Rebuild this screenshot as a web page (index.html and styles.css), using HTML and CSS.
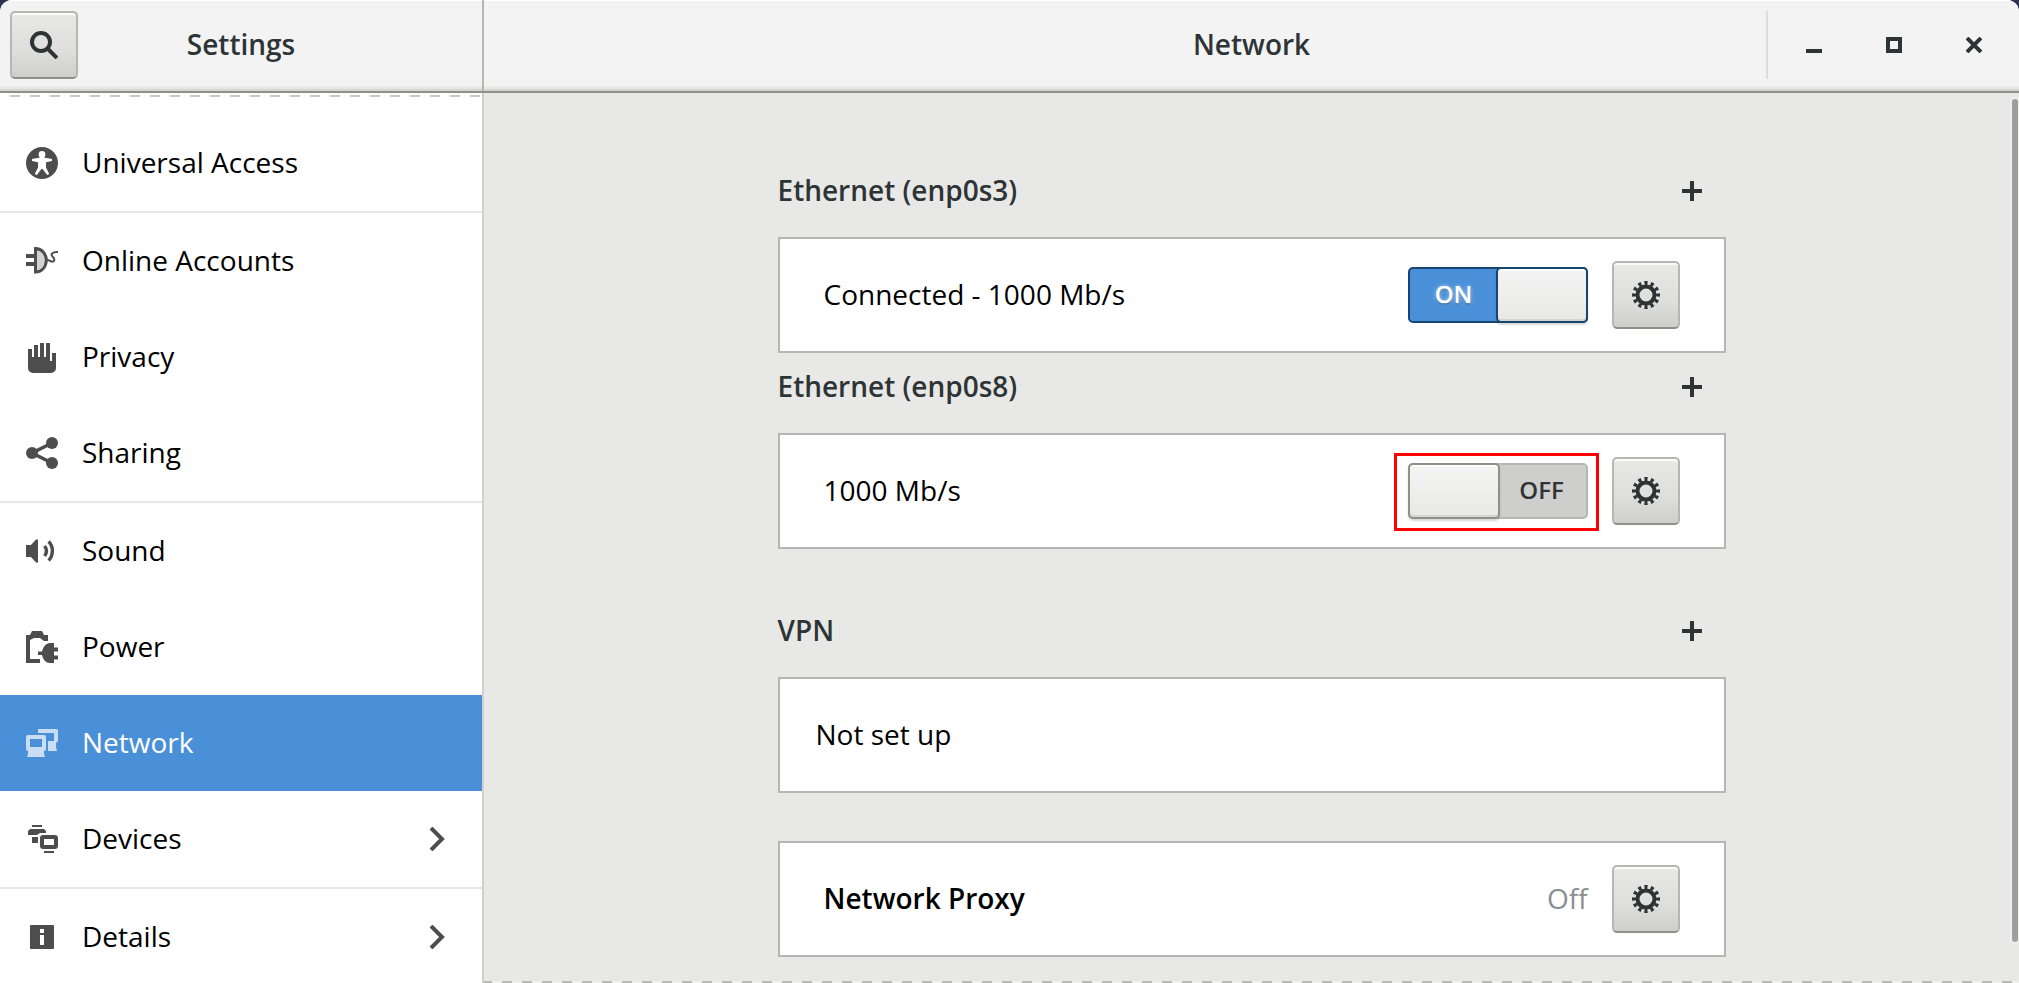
FILE: index.html
```html
<!DOCTYPE html>
<html lang="en">
<head>
  <meta charset="UTF-8" />
  <meta name="viewport" content="width=device-width, initial-scale=1.0"/>
  <title>Settings</title>
  <link rel="stylesheet" href="styles.css">
</head>
<body>

  <!-- symbols used more than once -->
  <svg class="defs" aria-hidden="true">
    <symbol id="gear" viewBox="0 0 28 28">
      <circle cx="14" cy="14" r="8.500" fill="none" stroke="currentColor" stroke-width="4"/>
      <circle cx="14" cy="14" r="12" fill="none" stroke="currentColor" stroke-width="4" pathLength="120" stroke-dasharray="5 5" stroke-dashoffset="2.5"/>
    </symbol>
    <symbol id="plus" viewBox="0 0 20 20">
      <path d="M8 0h4v8h8v4h-8v8H8v-8H0V8h8z" fill="currentColor"/>
    </symbol>
    <symbol id="chevron" viewBox="0 0 16 24">
      <path d="M2 1l11 11L2 23" fill="none" stroke="currentColor" stroke-width="4"/>
    </symbol>
  </svg>

  <div class="window">

    <header class="headerbar">
      <div class="header-side">
        <button class="btn" type="button" aria-label="Search">
          <svg width="28" height="28" viewBox="0 0 28 28">
            <circle cx="11" cy="11" r="9" fill="none" stroke="currentColor" stroke-width="4"/>
            <path d="M17 17l10 10" fill="none" stroke="currentColor" stroke-width="4"/>
          </svg>
        </button>
        <h1 class="title">Settings</h1>
      </div>
      <div class="header-main">
        <h2 class="title">Network</h2>
        <div class="window-controls">
          <button type="button" aria-label="Minimize">
            <svg width="16" height="16" viewBox="0 0 16 16"><path d="M0 12h16v4H0z" fill="currentColor"/></svg>
          </button>
          <button type="button" aria-label="Maximize">
            <svg width="16" height="16" viewBox="0 0 16 16"><path d="M2 2h12v12H2z" fill="none" stroke="currentColor" stroke-width="4"/></svg>
          </button>
          <button type="button" aria-label="Close">
            <svg width="16" height="16" viewBox="0 0 16 16"><path d="M1 1l14 14M15 1L1 15" fill="none" stroke="currentColor" stroke-width="4"/></svg>
          </button>
        </div>
      </div>
    </header>

    <div class="content">

      <nav class="sidebar">
        <a href="#universal-access" class="row section-end">
          <svg class="icon" viewBox="0 0 16 16">
            <path fill-rule="evenodd" fill="currentColor" d="M8 0a8 8 0 1 0 0 16A8 8 0 0 0 8 0zM8 2a1.7 1.7 0 0 1 1.7 1.7c0 .7-.3 1.2-.7 1.5L13 6v1l-3 .6v2.6l1.6 3.3-1 .5L8.300 11h-.6l-2.300 3-1-.5L6 10.200V7.600L3 7V6l4-.8c-.4-.3-.7-.8-.7-1.500A1.700 1.700 0 0 1 8 2z"/>
          </svg>
          <span class="label">Universal Access</span>
        </a>
        <a href="#online-accounts" class="row">
          <svg class="icon" viewBox="0 0 16 16">
            <path fill="currentColor" d="M0 4.500h4.500v2H0zM0 8.500h4.500v2H0z"/>
            <path d="M4.750 1.750C8 1.800 10 4.500 10.200 7.500 10 11 8 13.400 4.750 13.500z" fill="#d2d2d2" stroke="currentColor" stroke-width="1.500"/>
            <path d="M10.500 7.500c1.500 0 1.500.8 2.500.8 1.800 0 1.200-1.800.3-2.500-1-.9-.5-2.500 2.700-2.300" fill="none" stroke="currentColor"/>
          </svg>
          <span class="label">Online Accounts</span>
        </a>
        <a href="#privacy" class="row">
          <svg class="icon" viewBox="0 0 16 16">
            <path fill="currentColor" d="M1 4h2v4h1V2h2v6h1V1h2v7h1V1h2v9h1V6h2v7.500a2.500 2.500 0 0 1-2.500 2.500h-9A2.500 2.500 0 0 1 1 13.500z"/>
          </svg>
          <span class="label">Privacy</span>
        </a>
        <a href="#sharing" class="row section-end">
          <svg class="icon" viewBox="0 0 16 16">
            <path d="M13 3L3 8l10 5" fill="none" stroke="currentColor" stroke-width="1.800"/>
            <circle cx="3" cy="8" r="3" fill="currentColor"/>
            <circle cx="13" cy="3" r="3" fill="currentColor"/>
            <circle cx="13" cy="13" r="3" fill="currentColor"/>
          </svg>
          <span class="label">Sharing</span>
        </a>
        <a href="#sound" class="row">
          <svg class="icon" viewBox="0 0 16 16">
            <path fill="currentColor" d="M0 5h2.500L5 2.200h1v11.600H5L2.500 11H0z"/>
            <path d="M9.300 5.500c1.200 1.600 1.200 3.400 0 5M11.300 3.300c2.500 2.400 2.500 7 0 9.400" fill="none" stroke="currentColor" stroke-width="1.700"/>
          </svg>
          <span class="label">Sound</span>
        </a>
        <a href="#power" class="row">
          <svg class="icon" viewBox="0 0 16 16">
            <path fill="currentColor" d="M0 2h2l1-2h5l1 2h2v3H9L7 3.500H4L2 4.500V14h5v2H0z"/>
            <path fill="currentColor" d="M6 10.300h2C8.600 7.800 10 6 12 6h2v2.300h2v2h-2v2h2v2h-2V16h-2c-2 0-3.400-1.600-4-4H6z"/>
          </svg>
          <span class="label">Power</span>
        </a>
        <a href="#network" class="row selected" aria-current="page">
          <svg class="icon" viewBox="0 0 16 16">
            <path fill-rule="evenodd" fill="currentColor" d="M1 4h8a1 1 0 0 1 1 1v6a1 1 0 0 1-1 1v1.500l.5 1.500h-9l.5-1.500V12a1 1 0 0 1-1-1V5a1 1 0 0 1 1-1zm1 2v4h6V6z"/>
            <path fill="currentColor" d="M6 1h9a1 1 0 0 1 1 1v5l-1 1v2l.5 2H11V7h3V3H6z"/>
          </svg>
          <span class="label">Network</span>
        </a>
        <a href="#devices" class="row section-end">
          <svg class="icon" viewBox="0 0 16 16">
            <path fill="currentColor" d="M3 1h5v1H3zM2 3h7l1 1v1H7L5.500 6H1V4zM3 7h3v3H3zM9 14h5v1H9z"/>
            <rect x="8" y="7" width="7" height="5" rx=".6" fill="none" stroke="currentColor" stroke-width="2"/>
          </svg>
          <span class="label">Devices</span>
          <svg class="chevron"><use href="#chevron"/></svg>
        </a>
        <a href="#details" class="row">
          <svg class="icon" viewBox="0 0 16 16">
            <path fill-rule="evenodd" fill="currentColor" d="M2.500 2h11a.5.5 0 0 1 .5.5v11a.5.5 0 0 1-.5.5h-11a.5.5 0 0 1-.5-.5v-11a.5.5 0 0 1 .5-.5zM7 4v2h2V4zm0 3v5h2V7z"/>
          </svg>
          <span class="label">Details</span>
          <svg class="chevron"><use href="#chevron"/></svg>
        </a>
      </nav>

      <main class="panel">
        <div class="column">

          <section>
            <div class="section-head">
              <h3>Ethernet (enp0s3)</h3>
              <button class="add" type="button" aria-label="Add Ethernet (enp0s3) profile"><svg><use href="#plus"/></svg></button>
            </div>
            <div class="card">
              <span class="name">Connected - 1000 Mb/s</span>
              <label class="switch on">
                <input type="checkbox" aria-label="Ethernet (enp0s3)" checked>
                <span class="state">ON</span>
                <span class="knob"></span>
              </label>
              <button class="btn" type="button" aria-label="Ethernet (enp0s3) options"><svg class="gear"><use href="#gear"/></svg></button>
            </div>
          </section>

          <section>
            <div class="section-head">
              <h3>Ethernet (enp0s8)</h3>
              <button class="add" type="button" aria-label="Add Ethernet (enp0s8) profile"><svg><use href="#plus"/></svg></button>
            </div>
            <div class="card">
              <span class="name">1000 Mb/s</span>
              <label class="switch off highlight">
                <input type="checkbox" aria-label="Ethernet (enp0s8)">
                <span class="knob"></span>
                <span class="state">OFF</span>
              </label>
              <button class="btn" type="button" aria-label="Ethernet (enp0s8) options"><svg class="gear"><use href="#gear"/></svg></button>
            </div>
          </section>

          <section class="spaced">
            <div class="section-head">
              <h3>VPN</h3>
              <button class="add" type="button" aria-label="Add VPN"><svg><use href="#plus"/></svg></button>
            </div>
            <div class="card empty">
              <span class="name">Not set up</span>
            </div>
          </section>

          <section class="spaced">
            <div class="card">
              <strong class="name">Network Proxy</strong>
              <span class="value">Off</span>
              <button class="btn" type="button" aria-label="Network Proxy options"><svg class="gear"><use href="#gear"/></svg></button>
            </div>
          </section>

        </div>
        <div class="scrollbar"></div>
      </main>

    </div>
  </div>

</body>
</html>
```
FILE: styles.css
```css
* {
  box-sizing: border-box;
}

body {
  margin: 0;
  background-color: #2e3450;
  font-family: "Open Sans", "Noto Sans", sans-serif;
  font-size: 28px;
  line-height: 40px;
  color: #000;
}

h1, h2, h3 {
  margin: 0;
  font-size: 28px;
  font-weight: 600;
  color: #2e3436;
}

button {
  padding: 0;
  border: 0;
  background: none;
  color: #2e3436;
}

svg {
  display: block;
}

.defs {
  display: none;
}

.window {
  display: flex;
  flex-direction: column;
  height: 100vh;
  overflow: hidden;
  border-radius: 12px 12px 0 0;
  background-color: #e8e8e6;
}

/* header bar */
.headerbar {
  display: grid;
  grid-template-columns: 484px 1fr;
  flex: none;
  height: 93px;
  border-bottom: 2px solid #8f9189;
  background: linear-gradient(#f3f3f3 86px, #ebebeb 86px, #e6e6e5 89px, #d6d6d4 89px);
  box-shadow: inset 0 1px #fff;
}

.header-side {
  display: grid;
  grid-template-columns: 68px 1fr 68px;
  align-items: center;
  padding: 0 10px 1px;
  border-right: 2px solid #b6b6b3;
}

.title {
  text-align: center;
}

.header-main {
  display: grid;
  grid-template-columns: 1fr auto 1fr;
  align-items: center;
  padding-bottom: 1px;
}

.header-main .title {
  grid-column: 2;
}

.window-controls {
  display: flex;
  justify-self: end;
  padding-right: 5px;
  border-left: 2px solid #dcdcda;
}

.window-controls button {
  display: grid;
  place-items: center;
  width: 80px;
  height: 68px;
}

.window-controls button:first-child {
  margin-left: 6px;
}

.btn {
  display: grid;
  place-items: center;
  flex: none;
  width: 68px;
  height: 68px;
  border: 2px solid #b6b6b3;
  border-bottom-color: #8f9189;
  border-radius: 5px;
  background: linear-gradient(#e8e8e7, #dededc 60%, #cececc);
  box-shadow: inset 0 2px #fafafa;
}

.gear {
  width: 28px;
  height: 28px;
}

.content {
  display: grid;
  grid-template-columns: 484px 1fr;
  flex: 1;
  min-height: 0;
}

/* sidebar */
.sidebar {
  overflow: hidden;
  padding-top: 2px;
  border-right: 2px solid #d0d0ce;
  background-color: #fff;
}

.sidebar::before {
  content: "";
  display: block;
  height: 2px;
  margin: 0 0 18px 10px;
  background: repeating-linear-gradient(90deg, #c8c8c8 0 10px, #fff 10px 20px);
}

.row {
  display: flex;
  align-items: center;
  height: 96px;
  padding: 0 37px 0 26px;
  color: #000;
  text-decoration: none;
}

.section-end {
  height: 98px;
  border-bottom: 2px solid #e6e6e6;
}

.icon {
  width: 32px;
  height: 32px;
  margin-right: 24px;
  color: #4d4d4d;
}

.label {
  flex: 1;
}

/* lift the text so that its capitals are centred in the row */
.title, .label, .name, .value, .section-head h3 {
  padding-bottom: 2px;
}

.chevron {
  width: 16px;
  height: 24px;
  color: #4d4d4d;
}

.selected {
  background-color: #4a90d9;
  color: #fff;
}

.selected .icon {
  color: #c9def4;
}

/* network panel */
.panel {
  position: relative;
  overflow: hidden;
  padding-top: 64px;
}

.panel::after {
  content: "";
  position: absolute;
  left: -2px;
  right: 0;
  bottom: 0;
  height: 2px;
  background: repeating-linear-gradient(90deg, #b8b8b6 0 10px, #efefee 10px 20px);
}

.column {
  max-width: 948px;
  margin: 0 auto;
}

.spaced {
  margin-top: 48px;
}

.section-head {
  display: flex;
  align-items: center;
  justify-content: space-between;
  margin-bottom: 12px;
}

.add {
  display: grid;
  place-items: center;
  width: 68px;
  height: 68px;
}

.add svg {
  width: 20px;
  height: 20px;
}

.card {
  display: flex;
  align-items: center;
  gap: 24px;
  height: 116px;
  padding: 0 44px;
  border: 2px solid #b6b6b3;
  background-color: #fff;
}

.empty {
  padding: 0 36px;
}

.name {
  flex: 1;
}

strong {
  font-weight: 600;
}

.value {
  color: #8b8e8f;
}

/* switches */
.switch {
  position: relative;
  display: flex;
  width: 180px;
  height: 56px;
  border: 2px solid #b6b6b3;
  border-radius: 5px;
  background-color: #cececc;
  font-size: 24px;
  font-weight: 600;
  line-height: 50px;
  color: #2e3436;
}

.switch input {
  position: absolute;
  inset: 0;
  width: 100%;
  height: 100%;
  margin: 0;
  opacity: 0;
}

.state {
  flex: 1;
  text-align: center;
}

.knob {
  width: 92px;
  margin: -2px;
  border: 2px solid #8f9189;
  border-radius: 5px;
  background: linear-gradient(#f4f4f4, #e8e8e7);
  box-shadow: inset 0 2px #fff, inset 0 -2px #d4d4d2, 0 2px 2px rgba(0, 0, 0, 0.15);
}

.on {
  border-color: #184472;
  background-color: #4a90d9;
  color: #fff;
}

.on .state {
  text-shadow: 0 0 4px rgba(255, 255, 255, 0.6), 0 2px 2px rgba(0, 0, 0, 0.3);
}

.on .knob {
  border-color: #184472;
}

/* red frame round the switch */
.highlight::after {
  content: "";
  position: absolute;
  inset: -12px -13px -14px -16px;
  border: 3px solid #f00;
  pointer-events: none;
}

.scrollbar {
  position: absolute;
  top: 6px;
  right: 1px;
  bottom: 41px;
  width: 6px;
  border-radius: 3px;
  background-color: #9b9f9f;
  box-shadow: 0 0 0 2px #efefee;
}
```
